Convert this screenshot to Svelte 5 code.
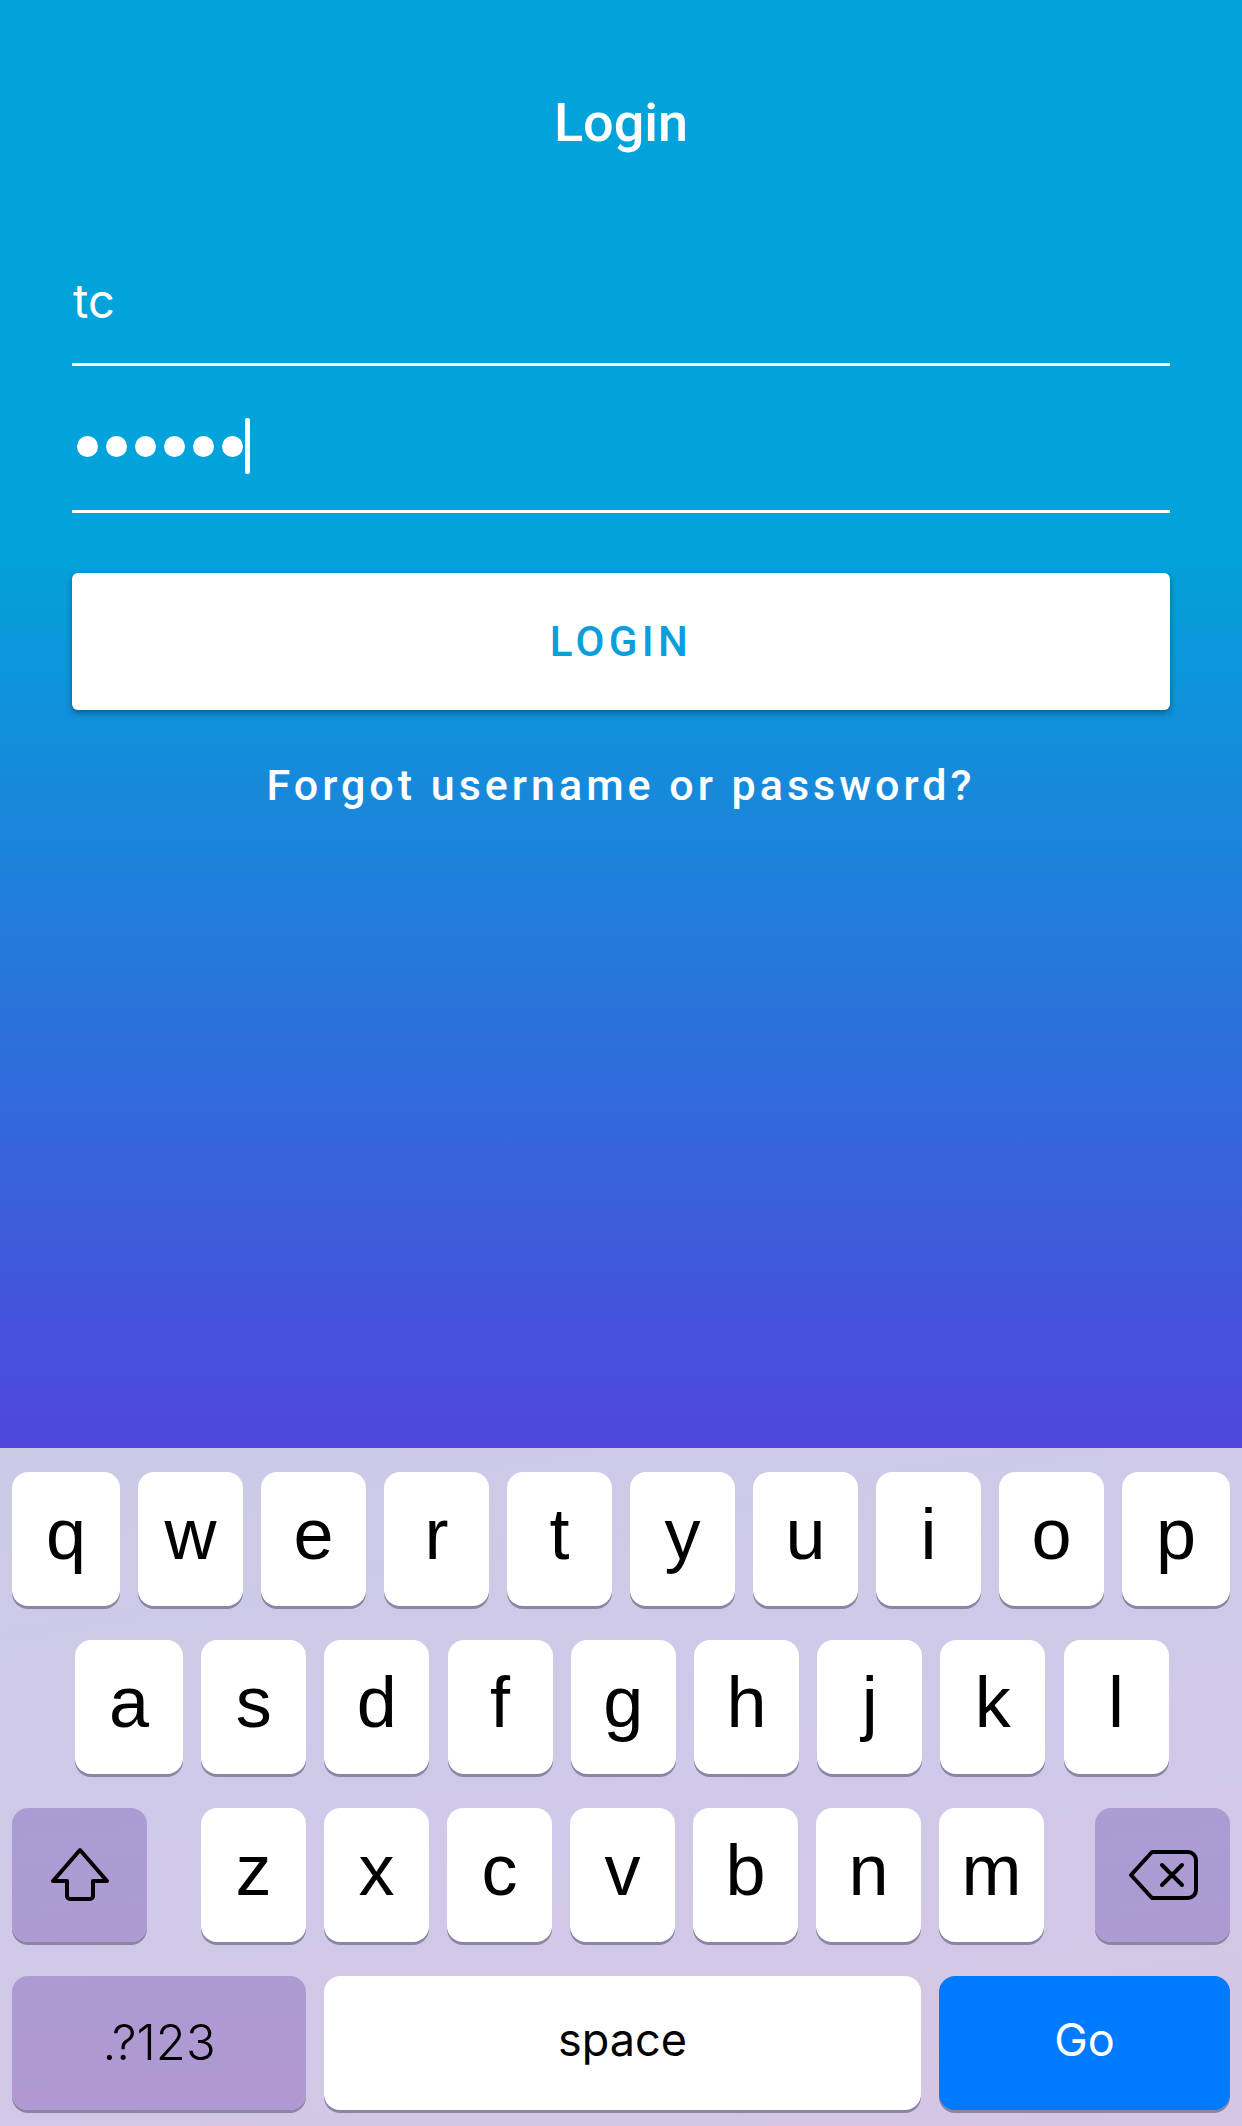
<script lang="ts">
	const rowOne = ['q', 'w', 'e', 'r', 't', 'y', 'u', 'i', 'o', 'p'];
	const rowTwo = ['a', 's', 'd', 'f', 'g', 'h', 'j', 'k', 'l'];
	const rowThree = ['z', 'x', 'c', 'v', 'b', 'n', 'm'];
	const passwordLength = 6;
</script>

<div class="screen">
	<main class="login">
		<h1>Login</h1>

		<div class="field first">
			<span class="value">tc</span>
		</div>

		<div class="field second">
			<span class="dots" aria-label="password">
				{#each Array(passwordLength) as _}
					<i></i>
				{/each}
			</span>
			<span class="caret"></span>
		</div>

		<button class="submit">LOGIN</button>
		<a class="forgot" href="#forgot">Forgot username or password?</a>
	</main>

	<section class="keyboard">
		<div class="row one">
			{#each rowOne as k}
				<div class="key">{k}</div>
			{/each}
		</div>

		<div class="row two">
			{#each rowTwo as k}
				<div class="key">{k}</div>
			{/each}
		</div>

		<div class="row three">
			<div class="key fn shift">
				<svg width="60" height="56" viewBox="0 0 60 56" fill="none" stroke="#000" stroke-width="4" stroke-linejoin="round">
					<path d="M30 3 L57 34 H43 V49 a3 3 0 0 1 -3 3 H20 a3 3 0 0 1 -3 -3 V34 H3 Z" />
				</svg>
			</div>
			<div class="letters">
				{#each rowThree as k}
					<div class="key">{k}</div>
				{/each}
			</div>
			<div class="key fn back">
				<svg width="70" height="52" viewBox="0 0 70 52" fill="none" stroke="#000" stroke-width="4" stroke-linecap="round" stroke-linejoin="round">
					<path d="M24 3 H60 a8 8 0 0 1 8 8 V41 a8 8 0 0 1 -8 8 H24 L3 26 Z" />
					<path d="M34 16 L54 36 M54 16 L34 36" />
				</svg>
			</div>
		</div>

		<div class="row four">
			<div class="key numbers">.?123</div>
			<div class="key space">space</div>
			<div class="key go">Go</div>
		</div>
	</section>
</div>

<style>
	:global(body) {
		margin: 0;
	}

	.screen {
		width: 1242px;
		height: 2126px;
		display: flex;
		flex-direction: column;
		overflow: hidden;
	}

	/* Form area */
	.login {
		height: 1448px;
		box-sizing: border-box;
		padding: 92px 72px 0;
		display: flex;
		flex-direction: column;
		background: linear-gradient(180deg, #01a3da 0%, #01a3da 37%, #5046dc 100%);
		font-family: Roboto, Inter, sans-serif;
		color: #fff;
	}

	h1 {
		margin: 0;
		height: 62px;
		line-height: 62px;
		font-size: 54px;
		font-weight: 500;
		text-align: center;
	}

	.field {
		box-sizing: border-box;
		display: flex;
		align-items: center;
		border-bottom: 3px solid #fff;
	}

	.field.first {
		margin-top: 113px;
		height: 99px;
		padding-bottom: 29px;
	}

	.field.second {
		margin-top: 48px;
		height: 99px;
		padding-bottom: 32px;
	}

	.value {
		font-family: Inter, Roboto, sans-serif;
		font-size: 47px;
		font-weight: 400;
		line-height: 60px;
		padding-left: 1px;
	}

	.dots {
		display: flex;
		gap: 8px;
		padding-left: 5px;
	}

	.dots i {
		width: 21px;
		height: 21px;
		border-radius: 50%;
		background: #fff;
	}

	.caret {
		width: 5px;
		height: 56px;
		border-radius: 2px;
		background: #fff;
		margin-left: 2px;
	}

	.submit {
		margin-top: 60px;
		height: 137px;
		border: 0;
		border-radius: 6px;
		background: #fff;
		color: #0a9fdb;
		font-family: inherit;
		font-size: 42px;
		font-weight: 500;
		letter-spacing: 4.4px;
		box-shadow: 0 3px 6px rgba(0, 0, 0, 0.35);
	}

	.forgot {
		margin-top: 48px;
		text-align: center;
		color: #fff;
		text-decoration: none;
		font-size: 43px;
		line-height: 54px;
		font-weight: 500;
		letter-spacing: 4px;
	}

	/* Keyboard */
	.keyboard {
		flex: 1;
		box-sizing: border-box;
		padding: 24px 12px 0;
		display: flex;
		flex-direction: column;
		gap: 34px;
		background: linear-gradient(170deg, #cbcbe6 0%, #d0c9e9 50%, #d5c6e3 100%);
		font-family: "Liberation Sans", Arial, sans-serif;
		color: #000;
	}

	.row {
		display: flex;
		gap: 18px;
		height: 134px;
	}

	.row.two {
		gap: 18.2px;
		padding-left: 63px;
	}

	.key {
		flex: 0 0 105px;
		height: 134px;
		display: flex;
		align-items: center;
		justify-content: center;
		padding-bottom: 11px;
		box-sizing: border-box;
		background: #fff;
		border-radius: 16px;
		box-shadow: 0 3px 0 #8a85a5;
		font-size: 72px;
		line-height: 1;
	}

	.row.one .key:first-child,
	.row.one .key:last-child,
	.row.two .key:first-child {
		flex-basis: 108px;
	}

	.row.three {
		gap: 0;
	}

	.letters {
		margin-left: 54px;
		display: flex;
		gap: 18px;
	}

	.key.fn {
		background: linear-gradient(175deg, #aa9dd3 0%, #ae9ad3 100%);
	}

	.shift {
		flex-basis: 135px;
		padding-bottom: 0;
	}

	.back {
		flex-basis: 135px;
		margin-left: auto;
		padding-bottom: 0;
	}

	.numbers,
	.space,
	.go {
		font-family: Inter, "Liberation Sans", sans-serif;
		font-size: 45px;
		padding-bottom: 8px;
	}

	.numbers {
		flex-basis: 294px;
		font-size: 49px;
		font-weight: 300;
		background: linear-gradient(175deg, #ad9bd3 0%, #b198d3 100%);
		padding-bottom: 2px;
	}

	.space {
		flex-basis: 597px;
	}

	.go {
		flex: 1;
		background: #007aff;
		color: #fff;
	}
</style>
